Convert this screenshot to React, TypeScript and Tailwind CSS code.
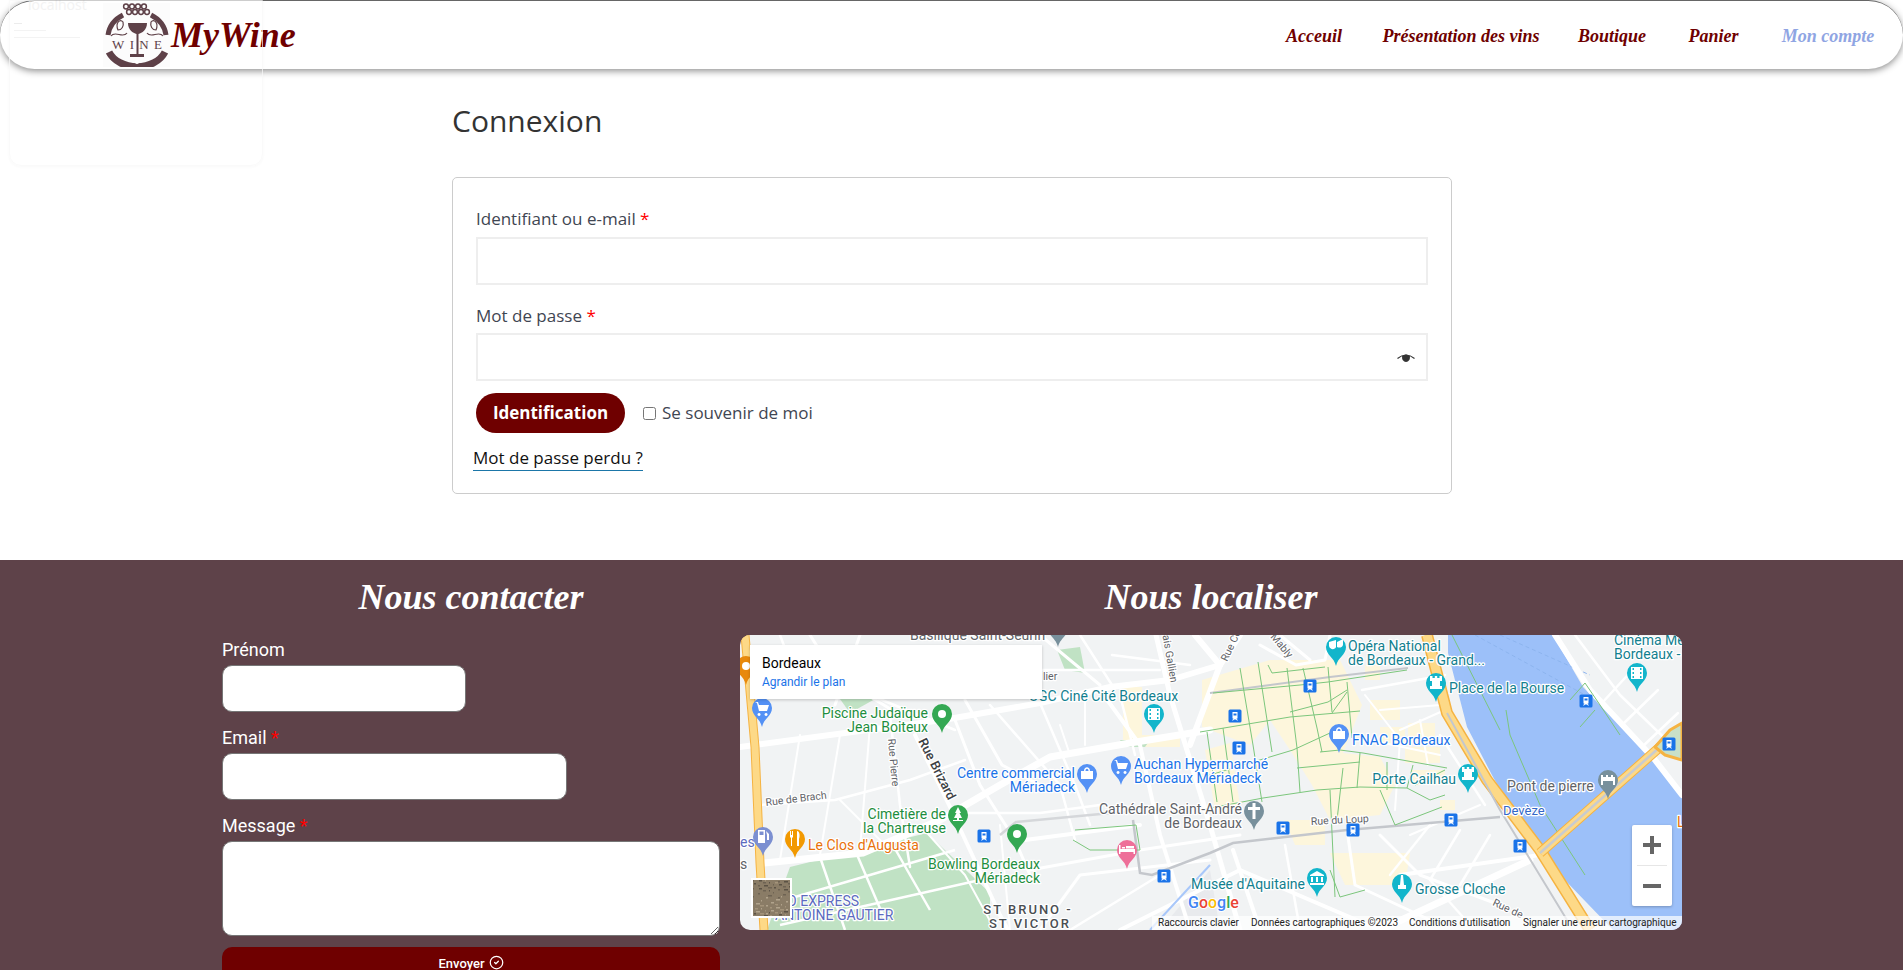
import { CircleCheck } from 'lucide-react';

const scriptFont = "font-['Liberation_Serif',serif] italic font-bold";

const navLinks = [
  { label: 'Acceuil', className: 'w-[62px] text-[#6f0000]' },
  { label: 'Présentation des vins', className: 'w-[152px] text-[#6f0000]' },
  { label: 'Boutique', className: 'w-[70px] text-[#6f0000]' },
  { label: 'Panier', className: 'w-[53px] text-[#6f0000]' },
  { label: 'Mon compte', className: 'w-[96px] text-[#8fa5e3]' },
];

// main roads of the map, [path, width]
const roads: [string, number][] = [
  ['M0 112 L203 85 L300 68 L370 52 L430 45 L480 30', 6],
  ['M24 228 L123 218 L200 185 L260 150 L310 122 L390 108 L470 95', 7],
  ['M175 100 L210 172 L260 280 L268 295', 4],
  ['M215 85 L240 150 L275 205 L290 240', 3],
  ['M225 65 L262 130 L300 150', 3],
  ['M250 70 L320 150 L335 205', 2.5],
  ['M300 68 L335 150 L350 190', 2.5],
  ['M360 55 L400 110 L420 200 L450 295', 4],
  ['M416 0 L430 60 L470 190 L500 295', 5],
  ['M150 80 L160 170 L170 232', 2.5],
  ['M60 100 L40 225', 2],
  ['M100 100 L80 220', 2],
  ['M130 90 L120 215', 2],
  ['M20 170 L95 165 L170 145 L225 125', 2.5],
  ['M100 165 L150 215', 2],
  ['M225 178 L300 178 L360 170', 2.5],
  ['M290 235 L400 215 L500 200', 3],
  ['M285 205 L400 190', 4],
  ['M260 190 L270 295', 2],
  ['M300 295 L340 240 L470 225', 3],
  ['M330 295 L420 240', 2.5],
  ['M380 295 L500 235 L640 295', 4],
  ['M120 0 L95 70', 3],
  ['M300 0 L360 50', 3],
  ['M340 0 L372 50', 2.5],
  ['M372 20 L450 30', 2.5],
  ['M300 35 L420 35', 2.5],
  ['M455 0 L480 30', 6],
  ['M500 0 L480 30 L450 110', 6],
  ['M520 10 L556 30 L585 25 L590 0', 3],
  ['M540 0 L570 25', 3],
  ['M493 215 L520 295', 4],
  ['M545 210 L560 295', 2.5],
  ['M607 195 L615 250 L690 285', 3],
  ['M640 200 L680 240 L760 270', 3],
  ['M690 190 L650 240', 2.5],
  ['M720 195 L690 245 L730 290', 2.5],
  ['M750 200 L720 250', 2.5],
  ['M660 240 L800 220', 4],
  ['M640 295 L790 225', 7],
  ['M700 100 L745 170', 2.5],
  ['M622 55 L705 40', 2.5],
  ['M625 60 L660 105 L655 175', 2],
  ['M640 75 L700 70', 2],
  ['M660 95 L705 75', 2],
  ['M630 105 L700 120', 2],
  ['M680 85 L688 130', 2],
  ['M670 200 L740 170', 2],
  ['M815 0 L850 55 L915 125 L942 160', 6],
  ['M835 0 L880 60 L942 120', 2.5],
  ['M862 68 L895 32', 2.5],
  ['M882 90 L918 55', 2.5],
  ['M902 112 L938 78', 2.5],
  ['M40 0 L55 40', 2.5],
  ['M70 0 L95 40 L160 80', 3],
  ['M130 60 L215 95', 2.5],
  ['M380 60 L395 120', 2.5],
  ['M320 90 L330 120', 2],
  ['M345 60 L345 110', 2],
  ['M180 190 L225 240 L255 295', 2],
];

const tramLines = [
  'M473 58 L560 50 L588 47 L667 35',
  'M460 97 L550 82 L620 76',
  'M550 77 L588 67 L607 55',
  'M500 33 L513 110 L522 167',
  'M518 27 L532 117',
  'M547 33 L557 113 L560 157',
  'M563 33 L577 93 L582 117',
  'M528 30 L532 38 L585 32',
  'M588 32 L592 77',
  'M607 57 L592 78',
  'M607 47 L612 103',
  'M460 143 L553 115 L590 98',
  'M580 117 L600 115 L623 118 L707 133',
  'M557 133 L620 127',
  'M460 175 L523 163 L577 155 L620 152 L667 153',
  'M620 118 L617 153',
  'M603 133 L601 150 L597 185',
  'M647 127 L647 155',
  'M467 97 L477 167',
  'M483 93 L493 167',
  'M673 130 L667 153 L690 165 L705 160',
  'M705 135 L675 150',
  'M655 190 L702 172',
  'M640 155 L655 190',
  'M590 155 L595 262',
  'M590 235 L600 262 L625 255',
  'M335 195 L396 190 L400 215 L350 215 L333 205',
  'M766 75 L770 100 L800 170 L845 240',
  'M845 48 L860 70 L880 100',
  'M830 65 L845 48',
  'M855 75 L840 92',
  'M712 0 L760 95',
];

type PinProps = { x: number; y: number; color: string; kind: string };

const Pin = ({ x, y, color, kind }: PinProps) => (
  <g transform={`translate(${x} ${y})`}>
    <path d="M0 0C-2-9-10-11-10-19A10 10 0 1 1 10-19C10-11 2-9 0 0Z" fill={color} />
    <g fill="white" stroke="none">
      {kind === 'dot' && <circle cx="0" cy="-19" r="4" />}
      {kind === 'cart' && <path d="M-7-25H-4L-3-22H7L5-16H-3L-5-24M-3-14a1.5 1.5 0 1 0 .1 0M4-14a1.5 1.5 0 1 0 .1 0" />}
      {kind === 'bag' && <path d="M-6-22H-3C-3-27 3-27 3-22H6V-14H-6ZM-1.5-22H1.5C1.5-25-1.5-25-1.5-22Z" fillRule="evenodd" />}
      {kind === 'tree' && <path d="M0-27L3-21H1.5L4-16H1V-14H5V-13H-5V-14H-1V-16H-4L-1.500-21H-3Z" />}
      {kind === 'film' && <path d="M-6-25H6V-13H-6ZM-4.500-24V-22H-3V-24ZM3-24V-22H4.500V-24ZM-4.500-20V-18H-3V-20ZM3-20V-18H4.500V-20ZM-4.500-16V-14H-3V-16ZM3-16V-14H4.500V-16Z" fillRule="evenodd" />}
      {kind === 'tower' && <path d="M-6-26H-3.500V-24H-1.200V-26H1.200V-24H3.500V-26H6V-21H4V-16H6V-13H-6V-16H-4V-21H-6Z" />}
      {kind === 'mask' && <path d="M-7-24L0-26V-19C-1-16-6-16-7-20ZM1-24L7-27V-21C6-18 3-18 1-19Z" />}
      {kind === 'museum' && <path d="M0-26L7-22V-21H-7V-22ZM-6-20H-4V-15H-6ZM-1-20H1V-15H-1ZM4-20H6V-15H4ZM-7-14H7V-12H-7Z" />}
      {kind === 'bell' && <path d="M-1-28H1L2-18H4V-14H-4V-18H-2Z" />}
      {kind === 'cross' && <path d="M-1.500-27H1.500V-23H6V-20H1.500V-11H-1.500V-20H-6V-23H-1.500Z" />}
      {kind === 'bridge' && <path d="M-7-24H-5V-22H-2V-24H0V-22H3V-24H5V-22H7V-14H5V-18H-5V-14H-7Z" />}
      {kind === 'fork' && <path d="M-5-27H-4V-23H-3V-27H-2V-21L-3-20V-12H-4V-20L-5-21ZM2-27C5-27 5-21 4-19V-12H2Z" />}
      {kind === 'gas' && <path d="M-5-26H2V-13H-5ZM-3.500-24.500V-21H.5V-24.500ZM3-25L6-22V-16H4V-21Z" fillRule="evenodd" />}
      {kind === 'bed' && <path d="M-8-15V-24H-6.500V-20H8V-15H6.500V-17H-6.500V-15ZM-5-22H-2V-20.500H-5ZM-1-23H7V-20.500H-1Z" />}
    </g>
  </g>
);

const Tram = ({ x, y }: { x: number; y: number }) => (
  <g transform={`translate(${x} ${y})`}>
    <rect x="-6.500" y="-6.500" width="13" height="13" rx="1.500" fill="#1a73e8" />
    <path d="M-2.500-4H2.500V2.500H-2.500ZM-1.500-2.500V-.5H1.500V-2.500ZM-3 4.500L-1.500 2.500H1.500L3 4.500H2L1 3.500H-1L-2 4.500Z" fill="white" fillRule="evenodd" />
  </g>
);

type LabelProps = {
  x: number;
  y: number;
  color: string;
  text: string;
  anchor?: 'start' | 'end' | 'middle';
  size?: number;
  rotate?: number;
  spacing?: number;
  weight?: number;
};

const Label = ({ x, y, color, text, anchor = 'start', size = 14, rotate = 0, spacing = 0, weight = 400 }: LabelProps) => (
  <text
    x={x}
    y={y}
    fill={color}
    fontSize={size}
    fontWeight={weight}
    textAnchor={anchor}
    letterSpacing={spacing}
    stroke="white"
    strokeWidth="2.500"
    paintOrder="stroke"
    strokeLinejoin="round"
    transform={rotate ? `rotate(${rotate} ${x} ${y})` : undefined}
  >
    {text}
  </text>
);

const GREEN = '#1e8e3e';
const TEAL = '#12808f';
const BLUE = '#1a73e8';
const GREY = '#5f6368';

const labels: LabelProps[] = [
  { x: 170, y: 5, color: GREY, text: 'Basilique Saint-Seurin' },
  { x: 188, y: 83, color: GREEN, text: 'Piscine Judaïque', anchor: 'end' },
  { x: 188, y: 97, color: GREEN, text: 'Jean Boiteux', anchor: 'end' },
  { x: 289, y: 66, color: TEAL, text: 'UGC Ciné Cité Bordeaux' },
  { x: 335, y: 143, color: BLUE, text: 'Centre commercial', anchor: 'end' },
  { x: 335, y: 157, color: BLUE, text: 'Mériadeck', anchor: 'end' },
  { x: 394, y: 134, color: BLUE, text: 'Auchan Hypermarché' },
  { x: 394, y: 148, color: BLUE, text: 'Bordeaux Mériadeck' },
  { x: 502, y: 179, color: GREY, text: 'Cathédrale Saint-André', anchor: 'end' },
  { x: 502, y: 193, color: GREY, text: 'de Bordeaux', anchor: 'end' },
  { x: 206, y: 184, color: GREEN, text: 'Cimetière de', anchor: 'end' },
  { x: 206, y: 198, color: GREEN, text: 'la Chartreuse', anchor: 'end' },
  { x: 300, y: 234, color: GREEN, text: 'Bowling Bordeaux', anchor: 'end' },
  { x: 300, y: 248, color: GREEN, text: 'Mériadeck', anchor: 'end' },
  { x: 68, y: 215, color: '#e8710a', text: "Le Clos d'Augusta" },
  { x: 0, y: 212, color: '#5c6bc0', text: 'es' },
  { x: 0, y: 234, color: GREY, text: 's' },
  { x: 35, y: 271, color: '#5c6bc0', text: 'ISO EXPRESS' },
  { x: 35, y: 285, color: '#5c6bc0', text: 'ANTOINE GAUTIER' },
  { x: 288, y: 279, color: '#4a4e52', text: 'ST BRUNO -', anchor: 'middle', size: 13, spacing: 2, weight: 500 },
  { x: 290, y: 293, color: '#4a4e52', text: 'ST VICTOR', anchor: 'middle', size: 13, spacing: 2, weight: 500 },
  { x: 178, y: 106, color: '#3c4043', text: 'Rue Brizard', size: 13, rotate: 63, weight: 500 },
  { x: 148, y: 104, color: GREY, text: 'Rue Pierre', size: 10.500, rotate: 85 },
  { x: 26, y: 171, color: GREY, text: 'Rue de Brach', size: 10.500, rotate: -7 },
  { x: 422, y: -2, color: GREY, text: 'lais Gallien', size: 10.500, rotate: 80 },
  { x: 303, y: 45, color: GREY, text: 'lier', size: 10.500 },
  { x: 487, y: 27, color: GREY, text: 'Rue Co', size: 10.500, rotate: -65 },
  { x: 530, y: 2, color: GREY, text: 'Mably', size: 10.500, rotate: 50 },
  { x: 571, y: 190, color: GREY, text: 'Rue du Loup', size: 10.500, rotate: -3 },
  { x: 752, y: 270, color: GREY, text: 'Rue de', size: 10.500, rotate: 25 },
  { x: 608, y: 16, color: TEAL, text: 'Opéra National' },
  { x: 608, y: 30, color: TEAL, text: 'de Bordeaux - Grand...' },
  { x: 709, y: 58, color: TEAL, text: 'Place de la Bourse' },
  { x: 874, y: 10, color: TEAL, text: 'Cinéma Mégarama' },
  { x: 874, y: 24, color: TEAL, text: 'Bordeaux - Bastide' },
  { x: 612, y: 110, color: BLUE, text: 'FNAC Bordeaux' },
  { x: 716, y: 149, color: TEAL, text: 'Porte Cailhau', anchor: 'end' },
  { x: 767, y: 156, color: GREY, text: 'Pont de pierre' },
  { x: 763, y: 180, color: '#3367c7', text: 'Devèze', size: 13 },
  { x: 565, y: 254, color: TEAL, text: "Musée d'Aquitaine", anchor: 'end' },
  { x: 675, y: 259, color: TEAL, text: 'Grosse Cloche' },
  { x: 937, y: 192, color: '#e8710a', text: 'Le' },
];

const pins: PinProps[] = [
  { x: 318, y: 12, color: '#78909c', kind: 'dot' },
  { x: 6, y: 50, color: '#e8890c', kind: 'dot' },
  { x: 22, y: 92, color: '#5491f5', kind: 'cart' },
  { x: 202, y: 98, color: '#34a853', kind: 'dot' },
  { x: 414, y: 98, color: '#12b5cb', kind: 'film' },
  { x: 347, y: 158, color: '#5491f5', kind: 'bag' },
  { x: 381, y: 150, color: '#5491f5', kind: 'cart' },
  { x: 514, y: 195, color: '#78909c', kind: 'cross' },
  { x: 218, y: 199, color: '#34a853', kind: 'tree' },
  { x: 277, y: 218, color: '#34a853', kind: 'dot' },
  { x: 55, y: 223, color: '#f29900', kind: 'fork' },
  { x: 23, y: 221, color: '#7b8fd1', kind: 'gas' },
  { x: 387, y: 234, color: '#ee6f99', kind: 'bed' },
  { x: 596, y: 31, color: '#12b5cb', kind: 'mask' },
  { x: 696, y: 67, color: '#12b5cb', kind: 'tower' },
  { x: 897, y: 57, color: '#12b5cb', kind: 'film' },
  { x: 599, y: 118, color: '#5491f5', kind: 'bag' },
  { x: 728, y: 158, color: '#12b5cb', kind: 'tower' },
  { x: 868, y: 164, color: '#78909c', kind: 'bridge' },
  { x: 577, y: 262, color: '#12b5cb', kind: 'museum' },
  { x: 662, y: 268, color: '#12b5cb', kind: 'bell' },
];

const trams = [
  [244, 201], [424, 241], [570, 51], [495, 81], [499, 113], [543, 193], [613, 195], [711, 185], [780, 211], [846, 66], [929, 109],
];

// speckles for the little satellite thumbnail
const speckles = Array.from({ length: 90 }, (_, i) => ({
  x: (i * 37) % 40,
  y: (i * 23) % 38,
  w: 1 + (i % 4),
  color: ['#6e6353', '#a3937a', '#8b7d68', '#5b5245', '#b1a38c'][i % 5],
}));

const BordeauxMap = () => (
  <svg viewBox="0 0 942 295" className="absolute inset-0 h-full w-full font-['Roboto',sans-serif]">
    <rect width="942" height="295" fill="#f1f3f4" />
    {/* old town */}
    <g fill="#fdf6dc">
      <path d="M462 45L530 25L600 25L622 70L603 118L640 122L655 150L640 180L590 185L572 150L552 118L530 85L510 110L462 92Z" />
      <path d="M383 52H402V100H440V112H383Z" />
      <path d="M465 115L490 108L500 170L475 175Z" />
      <path d="M590 218H670L665 250H605Z" />
      <path d="M630 65H660V85H630ZM640 92H665V110H640ZM668 88H695V105H668ZM665 112H700V128H665ZM672 135H705V150H672ZM700 165H715V175H700ZM625 30H640V45H625Z" />
      <path d="M545 185H585V210H555Z" />
    </g>
    {/* parks */}
    <path d="M50 232L187 198L250 258V295H27Z" fill="#c0e2c4" />
    <path d="M317 15L340 12L345 38L325 35Z" fill="#c0e2c4" />
    <path d="M100 64L135 64L110 78Z" fill="#c0e2c4" />
    <path d="M380 105H410L405 112H385Z" fill="#c0e2c4" />
    <path d="M80 222L105 295M115 215L145 285M150 205L190 275M55 262L215 215M40 290L240 245" stroke="#fff" strokeWidth="2.500" fill="none" />
    {/* gare / grey blocks */}
    <path d="M420 295L470 235L480 295Z" fill="#e8eaed" />
    {/* river */}
    <path d="M708 0H813L843 52L907 118L942 162V295H873L793 212L753 142L727 92L708 18Z" fill="#9cc0f9" />
    <path d="M735 0L845 60M760 0L850 40" stroke="#8db4ee" strokeWidth="1" fill="none" strokeDasharray="4 3" />
    <g fill="none" stroke="#fff" strokeLinecap="round" strokeLinejoin="round">
      {roads.map(([d, w], i) => (
        <path key={i} d={d} strokeWidth={w} />
      ))}
    </g>
    {/* rail and tram */}
    <path d="M393 185L400 238L412 240L470 218L493 208L607 195L760 182" fill="none" stroke="#c4c7cc" strokeWidth="2.500" />
    <path d="M260 200L276 187L350 180L393 176" fill="none" stroke="#d5d7da" strokeWidth="2.500" />
    <path d="M410 295L470 230" stroke="#a8c7fa" strokeWidth="2" fill="none" />
    <path d="M470 58L590 42L668 33" fill="none" stroke="#c4c7cc" strokeWidth="2" />
    <g fill="none" stroke="#7cc67c" strokeWidth="1">
      {tramLines.map((d, i) => (
        <path key={i} d={d} />
      ))}
    </g>
    {/* ring road and quays */}
    <g fill="none" strokeLinejoin="round">
      <path d="M5 0L15 112L20 228L24 295" stroke="#f5b342" strokeWidth="9" />
      <path d="M5 0L15 112L20 228L24 295" stroke="#fdd987" strokeWidth="7" />
      <path d="M687 0L707 78L747 145L800 215L850 295" stroke="#f5b342" strokeWidth="12" />
      <path d="M687 0L707 78L747 145L800 215L850 295" stroke="#fdd987" strokeWidth="9" />
      <path d="M800 218L920 112L942 96" stroke="#f5b342" strokeWidth="10" />
      <path d="M800 218L920 112L942 96" stroke="#fdd987" strokeWidth="8" />
      <path d="M800 218L920 112L942 96" stroke="#c9cbce" strokeWidth="2.500" />
      <path d="M707 78L760 175L827 285" stroke="#c4c7cc" strokeWidth="2" />
      <path d="M915 112L930 95L942 88V125L925 120Z" fill="#c8e0c8" stroke="#f5b342" strokeWidth="3" />
    </g>
    {labels.map((label) => (
      <Label key={label.text + label.x} {...label} />
    ))}
    {pins.map((pin) => (
      <Pin key={`${pin.x}-${pin.y}`} {...pin} />
    ))}
    {trams.map(([x, y]) => (
      <Tram key={`${x}-${y}`} x={x} y={y} />
    ))}
    <text x="448" y="273" fontSize="16" fontWeight="500" stroke="white" strokeWidth="2" paintOrder="stroke">
      <tspan fill="#4285f4">G</tspan>
      <tspan fill="#ea4335">o</tspan>
      <tspan fill="#fbbc05">o</tspan>
      <tspan fill="#4285f4">g</tspan>
      <tspan fill="#34a853">l</tspan>
      <tspan fill="#ea4335">e</tspan>
    </text>
    {/* map type thumbnail */}
    <rect x="11" y="243" width="41" height="40" fill="#fff" />
    <rect x="13" y="245" width="37" height="36" fill="#8a7c66" />
    <svg x="13" y="245" width="37" height="36">
      {speckles.map((s, i) => (
        <rect key={i} x={s.x} y={s.y} width={s.w} height="1.500" fill={s.color} />
      ))}
    </svg>
  </svg>
);

const WineLogo = () => (
  <svg viewBox="0 0 67 64" className="h-[64px] w-[67px] bg-[#fcfcfc]">
    <g fill="none" stroke="#5e4148">
      <path d="M5 32A30 27 0 0 1 20 12" strokeWidth="5" />
      <path d="M63 32A30 27 0 0 0 48 12" strokeWidth="5" />
      <path d="M6 49A30 23 0 0 0 62 49" strokeWidth="7" />
      {[23, 29, 35, 41, 26, 32, 38, 44].map((x, i) => (
        <circle key={i} cx={x} cy={i < 4 ? 3.500 : 9} r="2.400" strokeWidth="1.500" />
      ))}
      <path d="M8 33C12 27 20 36 24 30M60 33C56 27 48 36 44 30" strokeWidth="1.200" />
      <path d="M15 27C12 20 17 15 20 19C21 23 19 27 15 27ZM53 27C56 20 51 15 48 19C47 23 49 27 53 27Z" strokeWidth="1.200" />
    </g>
    <path d="M25 20H44C44 27 39 30 35.500 31V51H41V54H27V51H33.500V31C30 30 25 27 25 20Z" fill="#5e4148" />
    <text x="9" y="46" textLength="50" fontSize="13" fontFamily="'Liberation Serif', serif" fill="#5e4148">WINE</text>
    <circle cx="34" cy="59" r="2" fill="#fff" />
  </svg>
);

const EyeIcon = () => (
  <svg viewBox="0 0 18 10" className="h-[10px] w-[18px]">
    <path d="M0.500 5.500Q9 -1.500 17.500 5.500" fill="none" stroke="#333" strokeWidth="1.200" />
    <path d="M5 3.200Q9 0 13 3.200Q13.200 8.500 9 9Q4.800 8.500 5 3.200Z" fill="#333" />
  </svg>
);

const App = () => {
  return (
    <div className="relative h-[970px] overflow-hidden bg-white font-['Open_Sans',sans-serif]">
      {/* browser notification, almost faded out */}
      <div className="absolute left-[9px] top-0 z-20 h-[166px] w-[254px] rounded-b-xl border border-[#f9f9f9] opacity-70 shadow-[0_1px_3px_rgba(0,0,0,0.03)]">
        <p className="ml-[18px] mt-[-6px] text-sm leading-5 text-[#eeeeee]">localhost</p>
        <div className="ml-1 mt-[8px] h-[1px] w-[8px] bg-[#e4e4e4]" />
        <div className="ml-1 mt-[6px] h-[1px] w-[32px] bg-[#eeeeee]" />
        <div className="ml-1 mt-[6px] h-[1px] w-[66px] bg-[#eeeeee]" />
      </div>

      <header className="relative z-10 flex h-[69px] items-center justify-between rounded-[36px] border-t border-[#666666] bg-white shadow-[0_2px_7px_rgba(0,0,0,0.45)]">
        <div className="ml-[103px] flex items-center">
          <WineLogo />
          <span className={`${scriptFont} ml-[1px] text-4xl leading-none text-[#6f0000]`}>MyWine</span>
        </div>
        <nav className="mr-[27px] flex items-center gap-10 pt-[2px]">
          {navLinks.map((link) => (
            <a key={link.label} href="#" className={`${scriptFont} ${link.className} flex justify-center whitespace-nowrap text-[18px]`}>
              {link.label}
            </a>
          ))}
        </nav>
      </header>

      <main className="ml-[452px] h-[491px] w-[1000px] pt-[31px]">
        <h2 className="text-[30px] leading-[42px] text-[#333333]">Connexion</h2>
        <div className="mt-[35px] h-[317px] rounded-[5px] border border-[#cccccc] px-[23px] pt-[23px]">
          <label className="block text-[17px] leading-[36px] text-[#3f4652]">
            Identifiant ou e-mail <span className="text-[#ff0000]">*</span>
          </label>
          <input type="text" className="block h-[48px] w-[952px] border-2 border-[#eeeeee] bg-white outline-none" />
          <label className="mt-[13px] block text-[17px] leading-[35px] text-[#3f4652]">
            Mot de passe <span className="text-[#ff0000]">*</span>
          </label>
          <div className="relative w-[952px]">
            <input type="password" className="block h-[48px] w-full border-2 border-[#eeeeee] bg-white outline-none" />
            <span className="absolute right-[13px] top-[20px] flex">
              <EyeIcon />
            </span>
          </div>
          <div className="mt-[12px] flex items-center">
            <button type="button" className="h-[40px] w-[149px] rounded-full bg-[#6f0000] text-[17px] font-bold text-white">
              Identification
            </button>
            <label className="ml-[18px] flex items-center text-[17px] leading-[24px] text-[#3f4652]">
              <input type="checkbox" className="mr-[6px] h-[13px] w-[13px]" />
              Se souvenir de moi
            </label>
          </div>
          <a href="#" className="ml-[-3px] mt-[13px] inline-block border-b border-[#1b76a8] text-[17px] leading-[24px] text-[#111111]">
            Mot de passe perdu ?
          </a>
        </div>
      </main>

      <footer className="flex h-[410px] gap-5 bg-[#5e4249] pl-[222px] font-['Roboto',sans-serif] text-white">
        <section className="w-[498px]">
          <h3 className={`${scriptFont} pt-[16px] text-center text-[36px] leading-[42px]`}>Nous contacter</h3>
          <label className="mt-[21px] block text-[18px] leading-[22px]">Prénom</label>
          <input type="text" className="mt-[4px] block h-[47px] w-[244px] rounded-[10px] border border-[#767676] bg-white" />
          <label className="mt-[15px] block text-[18px] leading-[22px]">
            Email <span className="text-[#ff0000]">*</span>
          </label>
          <input type="email" className="mt-[4px] block h-[47px] w-[345px] rounded-[10px] border border-[#767676] bg-white" />
          <label className="mt-[15px] block text-[18px] leading-[22px]">
            Message <span className="text-[#ff0000]">*</span>
          </label>
          <textarea className="mt-[4px] block h-[95px] w-[498px] rounded-[10px] border border-[#767676] bg-white" />
          <button type="button" className="mt-[11px] flex h-[40px] w-[498px] items-start justify-center gap-1 rounded-[10px] bg-[#6f0000] pt-[7px] text-[13px] font-medium">
            Envoyer <CircleCheck size={15} className="mt-[1px]" />
          </button>
        </section>
        <section className="w-[942px]">
          <h3 className={`${scriptFont} pt-[16px] text-center text-[36px] leading-[42px]`}>Nous localiser</h3>
          <div className="relative mt-[17px] h-[295px] w-[942px] overflow-hidden rounded-[10px] text-black">
            <BordeauxMap />
            <div className="absolute left-[10px] top-[10px] h-[54px] w-[292px] bg-white pl-[12px] pt-[9px] shadow-[0_1px_3px_rgba(0,0,0,0.2)]">
              <p className="text-sm leading-[18px]">Bordeaux</p>
              <p className="mt-[1px] text-xs leading-[18px] text-[#1a73e8]">Agrandir le plan</p>
            </div>
            <div className="absolute left-[892px] top-[190px] flex h-[81px] w-[40px] flex-col items-center rounded-[2px] bg-white shadow-[0_1px_3px_rgba(0,0,0,0.25)]">
              <svg viewBox="0 0 18 18" className="mt-[11px] h-[18px] w-[18px]">
                <path d="M7 0H11V7H18V11H11V18H7V11H0V7H7Z" fill="#666666" />
              </svg>
              <div className="mt-[11px] h-[1px] w-[30px] bg-[#e6e6e6]" />
              <svg viewBox="0 0 18 4" className="mt-[18px] h-[4px] w-[18px]">
                <rect width="18" height="4" fill="#666666" />
              </svg>
            </div>
            <div className="absolute bottom-0 right-0 flex h-[14px] w-[530px] items-center bg-white/70 pl-[6px] text-[10px] leading-none text-[#222222]">
              <span className="w-[93px]">Raccourcis clavier</span>
              <span className="w-[158px]">Données cartographiques ©2023</span>
              <span className="w-[114px]">Conditions d'utilisation</span>
              <span>Signaler une erreur cartographique</span>
            </div>
          </div>
        </section>
      </footer>
    </div>
  );
};

export default App;
